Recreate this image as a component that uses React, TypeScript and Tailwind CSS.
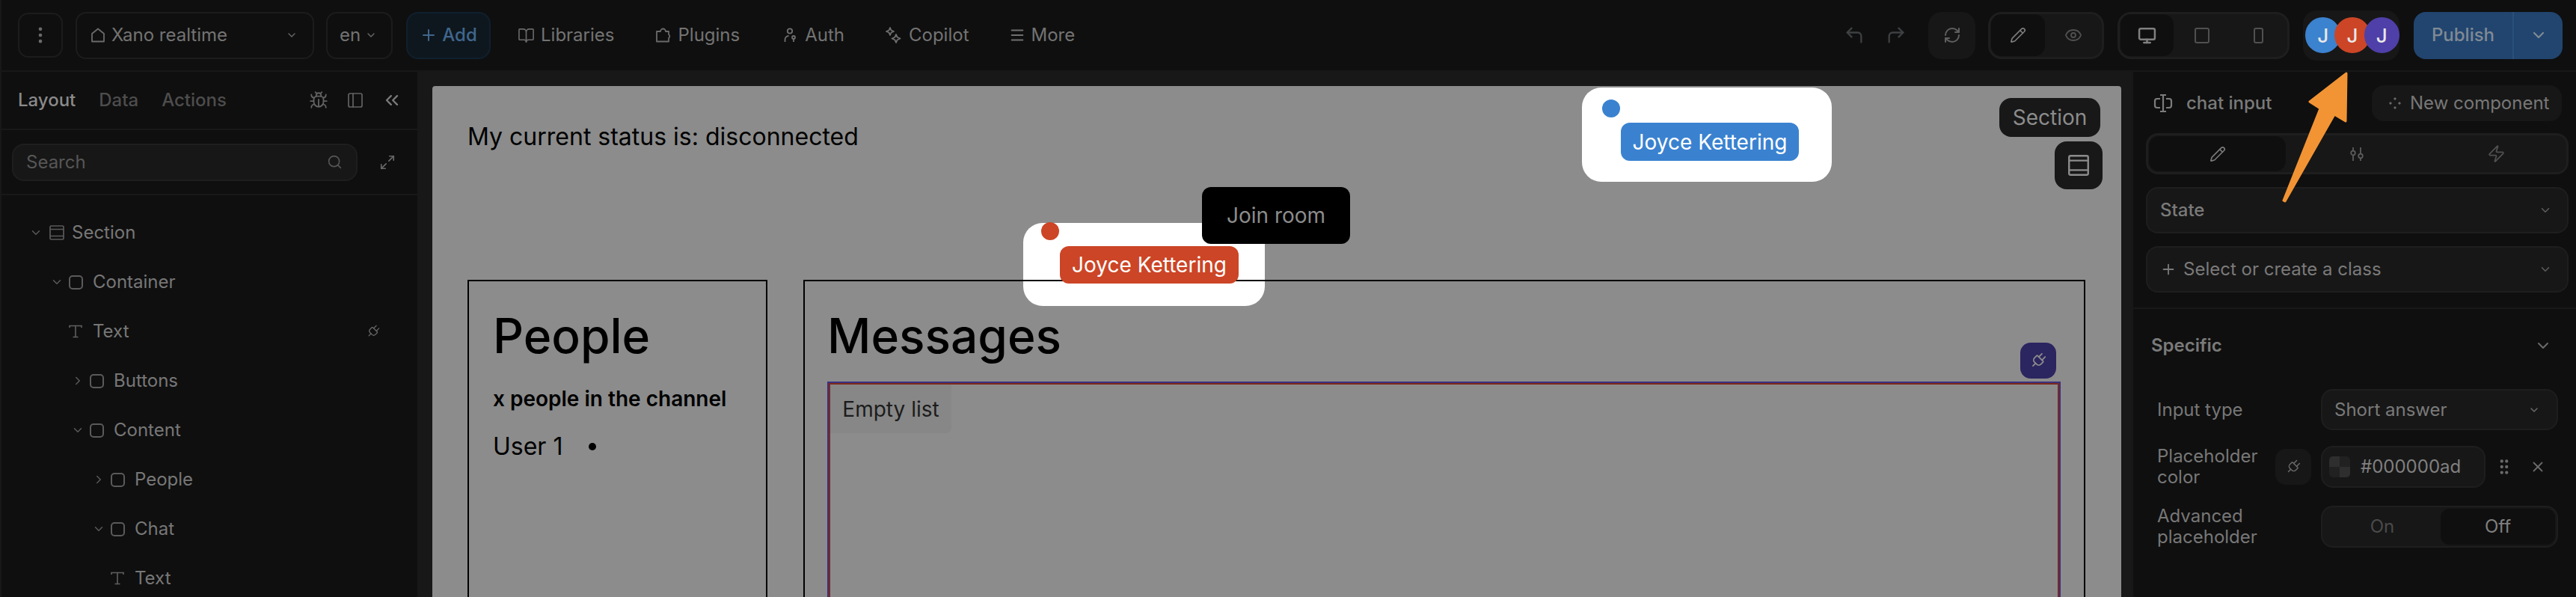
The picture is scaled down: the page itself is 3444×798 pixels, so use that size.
import {
  Bug,
  ChevronDown,
  ChevronRight,
  ChevronsLeft,
  CornerUpLeft,
  CornerUpRight,
  EllipsisVertical,
  Eye,
  GripVertical,
  BookOpen,
  Maximize2,
  Menu,
  Monitor,
  PanelLeft,
  Pencil,
  Plug,
  Plus,
  RefreshCw,
  Search,
  X,
  Zap,
} from "lucide-react";

function HomeIcon() {
  return (
    <svg width="22" height="20" viewBox="0 0 22 20" fill="none" stroke="#6a6a6a" strokeWidth="1.8" strokeLinejoin="round">
      <path d="M11 1.5 19 8v10.5H3V8Z" />
    </svg>
  );
}

function PluginIcon() {
  return (
    <svg width="23" height="20" viewBox="0 0 23 20" fill="none" stroke="#6a6a6a" strokeWidth="1.8" strokeLinejoin="round">
      <path d="M3 5h5a3.5 3.5 0 0 1 7 0h4v4a3 3 0 0 1 0 5v4.5H3Z" />
    </svg>
  );
}

function AuthIcon() {
  return (
    <svg width="20" height="20" viewBox="0 0 20 20" fill="none" stroke="#707070" strokeWidth="1.8">
      <circle cx="9" cy="4.5" r="3.2" />
      <path d="M2.5 19v-3a5 5 0 0 1 5-5" />
      <circle cx="14" cy="13" r="2" />
      <path d="M14 15v4" />
    </svg>
  );
}

function SparkIcon() {
  return (
    <svg width="22" height="22" viewBox="0 0 22 22" fill="none" stroke="#707070" strokeWidth="1.8" strokeLinejoin="round">
      <path d="M7 1 8.5 4.5 12 6 8.5 7.5 7 11 5.5 7.5 2 6 5.5 4.5Z" />
      <path d="M15 10l1.7 3.8 3.8 1.7-3.8 1.7L15 21l-1.7-3.8-3.8-1.7 3.8-1.7Z" />
    </svg>
  );
}

function SectionIcon({ className }: { className: string }) {
  return (
    <svg className={className} viewBox="0 0 24 24" fill="none" stroke="currentColor" strokeWidth="1.7">
      <rect x="3" y="3" width="18" height="18" rx="1.5" />
      <path d="M3 7.5h18M3 16.5h18" />
    </svg>
  );
}

function BoxIcon() {
  return <span className="block h-[19px] w-[19px] rounded-[5px] border-2 border-[#5a5a5a]" />;
}

function SerifT() {
  return (
    <svg width="18" height="18" viewBox="0 0 18 18" fill="none" stroke="#5f5f5f" strokeWidth="1.6">
      <path d="M1 4V1.5h16V4M9 1.5V16.5M5.5 16.5h7" />
    </svg>
  );
}

function SlidersIcon() {
  return (
    <svg width="20" height="20" viewBox="0 0 20 20" fill="none" stroke="#5c5c5c" strokeWidth="1.8">
      <path d="M5 1v4M5 12v7M15 1v8M15 16v3" />
      <circle cx="5" cy="8.5" r="2.8" />
      <circle cx="15" cy="12.5" r="2.8" />
    </svg>
  );
}

function CursorIcon() {
  return (
    <svg width="26" height="26" viewBox="0 0 26 26" fill="none" stroke="#7c7c7c" strokeWidth="2.2">
      <path d="M9 2h8M9 24h8M13 2v22M9 7H5a3 3 0 0 0-3 3v6a3 3 0 0 0 3 3h4M17 7h4a3 3 0 0 1 3 3v6a3 3 0 0 1-3 3h-4" />
    </svg>
  );
}

function DotsIcon() {
  return (
    <svg width="18" height="18" viewBox="0 0 18 18" fill="#6a6a6a">
      <path d="M9 1 11 3 9 5 7 3ZM3 7 5 9 3 11 1 9ZM15 7 17 9 15 11 13 9ZM9 13 11 15 9 17 7 15Z" />
    </svg>
  );
}

const tree = [
  { label: "Section", pad: "pl-[37px]", kind: "section", chev: "down" },
  { label: "Container", pad: "pl-[65px]", kind: "box", chev: "down" },
  { label: "Text", pad: "pl-[65px]", kind: "text", chev: "", plug: true },
  { label: "Buttons", pad: "pl-[93px]", kind: "box", chev: "right" },
  { label: "Content", pad: "pl-[93px]", kind: "box", chev: "down" },
  { label: "People", pad: "pl-[121px]", kind: "box", chev: "right" },
  { label: "Chat", pad: "pl-[121px]", kind: "box", chev: "down" },
  { label: "Text", pad: "pl-[121px]", kind: "text", chev: "" },
];

function TopBar() {
  return (
    <header className="flex h-[96px] shrink-0 items-center border-b-2 border-[#181818] pl-[22px] pr-[18px] text-[24px] text-[#737373]">
      <button className="flex h-[60px] w-[60px] items-center justify-center rounded-[14px] border-2 border-[#1c1c1c]">
        <EllipsisVertical size={28} color="#6a6a6a" />
      </button>
      <button className="ml-[17px] flex h-[63px] w-[319px] items-center gap-[7px] rounded-[14px] border-2 border-[#1c1c1c] pl-[17px] pr-[20px]">
        <HomeIcon />
        <span>Xano realtime</span>
        <ChevronDown size={16} color="#6a6a6a" className="ml-auto" />
      </button>
      <button className="ml-[16px] flex h-[63px] w-[89px] items-center gap-[6px] rounded-[14px] border-2 border-[#1c1c1c] pl-[16px]">
        <span>en</span>
        <ChevronDown size={16} color="#6a6a6a" />
      </button>
      <button className="ml-[18px] flex h-[63px] w-[113px] items-center justify-center gap-[6px] rounded-[16px] border-2 border-[#10202e] bg-[#0e171e] font-medium text-[#40668c]">
        <Plus size={24} />
        <span>Add</span>
      </button>
      <nav className="ml-[36px] flex items-center gap-[54px]">
        <span className="flex items-center gap-[8px]">
          <BookOpen size={23} color="#6a6a6a" strokeWidth={1.7} />
          Libraries
        </span>
        <span className="flex items-center gap-[8px]">
          <PluginIcon />
          Plugins
        </span>
        <span className="ml-[4px] flex items-center gap-[9px]">
          <AuthIcon />
          Auth
        </span>
        <span className="flex items-center gap-[10px]">
          <SparkIcon />
          Copilot
        </span>
        <span className="flex items-center gap-[7px]">
          <Menu size={22} color="#707070" strokeWidth={2.2} />
          More
        </span>
      </nav>

      <div className="ml-auto flex items-center">
        <CornerUpLeft size={28} color="#3d4142" strokeWidth={2} />
        <CornerUpRight size={28} color="#3d4142" strokeWidth={2} className="ml-[28px]" />
        <button className="ml-[29px] flex h-[63px] w-[63px] items-center justify-center rounded-[18px] bg-[#171717]">
          <RefreshCw size={24} color="#5f5f5f" strokeWidth={2} />
        </button>
        <div className="ml-[17px] flex h-[63px] w-[155px] items-center rounded-[18px] border-[3px] border-[#1e1e1e] bg-[#171717] p-[1px]">
          <span className="flex h-[56px] w-[72px] items-center justify-center rounded-[14px] bg-[#0f0f0f]">
            <Pencil size={22} color="#7c7c7c" strokeWidth={1.8} />
          </span>
          <span className="flex flex-1 items-center justify-center">
            <Eye size={24} color="#505050" strokeWidth={1.8} />
          </span>
        </div>
        <div className="ml-[18px] flex h-[63px] w-[230px] items-center rounded-[18px] border-[3px] border-[#1e1e1e] bg-[#171717] p-[1px]">
          <span className="flex h-[56px] w-[72px] items-center justify-center rounded-[14px] bg-[#0f0f0f]">
            <Monitor size={25} color="#808080" strokeWidth={2.4} />
          </span>
          <span className="flex w-[76px] items-center justify-center">
            <span className="h-[21px] w-[20px] rounded-[3px] border-2 border-[#505050]" />
          </span>
          <span className="flex w-[76px] items-center justify-center">
            <span className="h-[21px] w-[13px] rounded-[3px] border-2 border-[#505050]" />
          </span>
        </div>
        <div className="ml-[18px] flex h-[67px] w-[129px] items-center rounded-[18px] bg-[#171717] pl-[3px]">
          <span className="flex h-[48px] w-[48px] items-center justify-center rounded-full bg-[#3b82cf] text-[26px] font-medium text-[#e8e8e8]">J</span>
          <span className="-ml-[8px] flex h-[48px] w-[48px] items-center justify-center rounded-full bg-[#cc4526] text-[26px] font-medium text-[#e8e8e8]">J</span>
          <span className="-ml-[8px] flex h-[48px] w-[48px] items-center justify-center rounded-full bg-[#4f3fa8] text-[26px] font-medium text-[#e8e8e8]">J</span>
        </div>
        <div className="ml-[19px] flex h-[63px] w-[199px] items-center rounded-[16px] bg-[#21456f] text-[#808a94]">
          <span className="flex h-full w-[134px] items-center justify-center border-r-2 border-[#2a5078] font-medium">Publish</span>
          <span className="flex flex-1 items-center justify-center">
            <ChevronDown size={24} color="#808a94" strokeWidth={2.2} />
          </span>
        </div>
      </div>
    </header>
  );
}

function LeftPanel() {
  return (
    <aside className="flex w-[556px] shrink-0 flex-col bg-[#0f0f0f] text-[24px]">
      <div className="flex h-[78px] shrink-0 items-center border-b-2 border-[#181818] pl-[22px] pr-[20px]">
        <span className="font-medium text-[#8a8a8a]">Layout</span>
        <span className="ml-[31px] font-medium text-[#4d4d4d]">Data</span>
        <span className="ml-[31px] font-medium text-[#4d4d4d]">Actions</span>
        <Bug size={26} color="#626262" strokeWidth={1.7} className="ml-auto" />
        <PanelLeft size={24} color="#626262" strokeWidth={1.7} className="ml-[24px]" />
        <ChevronsLeft size={28} color="#7a7a7a" strokeWidth={2} className="ml-[23px]" />
      </div>
      <div className="flex h-[87px] shrink-0 items-center border-b-2 border-[#181818] pl-[14px]">
        <div className="flex h-[50px] w-[462px] items-center justify-between rounded-[16px] border-2 border-[#1e1e1e] bg-[#171717] pl-[17px] pr-[18px] text-[#565656]">
          <span>Search</span>
          <Search size={21} color="#565656" strokeWidth={1.8} />
        </div>
        <Maximize2 size={22} color="#6a6a6a" strokeWidth={1.8} className="ml-[29px]" />
      </div>
      <div className="pt-[17px]">
        {tree.map((row, i) => (
          <div key={i} className={`flex h-[66px] items-center ${row.pad} text-[#777777]`}>
            <span className="flex w-[25px] shrink-0 items-center">
              {row.chev === "down" && <ChevronDown size={18} color="#5a5a5a" strokeWidth={2} />}
              {row.chev === "right" && <ChevronRight size={18} color="#5a5a5a" strokeWidth={2} />}
            </span>
            <span className="flex w-[32px] shrink-0 items-center">
              {row.kind === "section" && <SectionIcon className="h-[24px] w-[24px] text-[#5a5a5a]" />}
              {row.kind === "box" && <BoxIcon />}
              {row.kind === "text" && <SerifT />}
            </span>
            <span>{row.label}</span>
            {row.plug && <Plug size={20} color="#666666" strokeWidth={1.6} className="ml-auto mr-[49px] rotate-45" />}
          </div>
        ))}
      </div>
    </aside>
  );
}

function Cursor({
  card,
  dot,
  dotColor,
}: {
  card: string;
  dot: string;
  dotColor: string;
}) {
  return (
    <div className={`absolute rounded-[26px] bg-white ${card}`}>
      <span className={`absolute h-[24px] w-[24px] rounded-full ${dot} ${dotColor}`} />
    </div>
  );
}

function Canvas() {
  return (
    <div className="min-w-0 flex-1 bg-[#181818] pl-[20px] pr-[16px] pt-[19px]">
      <div className="relative h-full overflow-hidden rounded-t-[4px] bg-[#8c8c8c] pl-[47px] pr-[48px] pt-[44px] text-black">
        <Cursor card="left-[1537px] top-[2px] h-[126px] w-[334px]" dot="left-[27px] top-[16px]" dotColor="bg-[#3a82d0]" />
        <Cursor card="left-[790px] top-[183px] h-[111px] w-[323px]" dot="left-[24px] -top-[1px]" dotColor="bg-[#cc4526]" />

        <p className="relative text-[32px] leading-[48px]">My current status is: disconnected</p>

        <div className="relative mt-[167px] flex h-[500px] gap-[48px]">
          <section className="w-[401px] shrink-0 border-2 border-black pl-[32px] pt-[37px]">
            <h2 className="text-[64px] font-medium leading-[72px]">People</h2>
            <p className="mt-[28px] text-[28px] font-semibold leading-[40px]">x people in the channel</p>
            <div className="mt-[20px] flex items-center text-[32px] leading-[48px]">
              <span>User 1</span>
              <span className="ml-[35px] h-[10px] w-[10px] rounded-full bg-black" />
            </div>
          </section>
          <section className="relative flex-1 border-2 border-black pl-[30px] pr-[31px] pt-[37px]">
            <h2 className="text-[64px] font-medium leading-[72px]">Messages</h2>
            <button className="absolute right-[37px] top-[82px] flex h-[48px] w-[48px] items-center justify-center rounded-[14px] bg-[#2b2560]">
              <Plug size={24} color="#8c8c8c" strokeWidth={1.8} className="rotate-45" />
            </button>
            <div className="mt-[25px] h-[400px] border-2 border-[#3b3180]">
              <div className="h-full border-2 border-b-0 border-[#7c2a1a]">
                <div className="flex h-[65px] w-[162px] items-center justify-center rounded-br-[8px] bg-[#878787] text-[28px] text-[#1c1c1c]">
                  Empty list
                </div>
              </div>
            </div>
          </section>
        </div>

        <span className="absolute left-[1589px] top-[49px] flex h-[51px] w-[238px] items-center justify-center rounded-[12px] bg-[#3a82d0] text-[28px] text-white">
          Joyce Kettering
        </span>
        <span className="absolute left-[839px] top-[214px] flex h-[50px] w-[239px] items-center justify-center rounded-[12px] bg-[#cc4526] text-[28px] text-white">
          Joyce Kettering
        </span>
        <button className="absolute left-[1029px] top-[135px] flex h-[76px] w-[198px] items-center justify-center rounded-[12px] bg-black text-[28px] text-[#8c8c8c]">
          Join room
        </button>
        <span className="absolute left-[2095px] top-[16px] flex h-[52px] w-[135px] items-center justify-center rounded-[16px] bg-[#181818] text-[28px] text-[#8c8c8c]">
          Section
        </span>
        <button className="absolute left-[2169px] top-[74px] flex h-[64px] w-[64px] items-center justify-center rounded-[16px] bg-[#181818]">
          <SectionIcon className="h-[34px] w-[34px] text-[#8c8c8c]" />
        </button>
      </div>
    </div>
  );
}

function RightPanel() {
  return (
    <aside className="w-[592px] shrink-0 bg-[#0f0f0f] text-[24px] text-[#7a7a7a]">
      <div className="flex h-[82px] items-center pl-[27px] pr-[19px] pt-[1px]">
        <CursorIcon />
        <span className="ml-[18px] font-medium">chat input</span>
        <button className="ml-auto flex h-[48px] w-[254px] items-center gap-[11px] rounded-[16px] bg-[#171717] pl-[22px] text-[#777777]">
          <DotsIcon />
          New component
        </button>
      </div>
      <div className="ml-[17px] flex h-[55px] w-[565px] items-center rounded-[16px] border-[3px] border-[#1e1e1e] bg-[#171717] pl-[1px]">
        <span className="flex h-[47px] w-[183px] items-center justify-center rounded-[14px] bg-[#0f0f0f]">
          <Pencil size={22} color="#7a7a7a" strokeWidth={1.8} />
        </span>
        <span className="flex w-[190px] items-center justify-center">
          <SlidersIcon />
        </span>
        <span className="flex w-[182px] items-center justify-center">
          <Zap size={25} color="#505050" strokeWidth={1.7} />
        </span>
      </div>
      <div className="ml-[17px] mt-[17px] flex h-[62px] w-[565px] items-center justify-between rounded-[16px] border-2 border-[#1e1e1e] bg-[#171717] pl-[17px] pr-[20px] font-medium">
        State
        <ChevronDown size={18} color="#5f5f5f" />
      </div>
      <div className="ml-[17px] mt-[17px] flex h-[62px] w-[565px] items-center rounded-[16px] border-2 border-[#1e1e1e] bg-[#171717] pl-[17px] pr-[20px]">
        <Plus size={22} color="#7a7a7a" />
        <span className="ml-[9px]">Select or create a class</span>
        <ChevronDown size={18} color="#5f5f5f" className="ml-auto" />
      </div>
      <div className="mt-[20px] border-t-2 border-[#181818] pl-[24px] pr-[24px] pt-[32px]">
        <div className="flex h-[34px] items-center justify-between font-semibold">
          Specific
          <ChevronDown size={24} color="#6a6a6a" strokeWidth={2} className="mr-[8px]" />
        </div>
        <div className="mt-[41px] flex h-[55px] items-center">
          <span className="ml-[8px] w-[219px] text-[#777777]">Input type</span>
          <div className="flex h-[55px] w-[317px] items-center justify-between rounded-[16px] border-2 border-[#1e1e1e] bg-[#171717] pl-[16px] pr-[22px]">
            Short answer
            <ChevronDown size={16} color="#6a6a6a" strokeWidth={2.2} />
          </div>
        </div>
        <div className="mt-[21px] flex h-[56px] items-center">
          <span className="ml-[8px] w-[158px] leading-[28px] text-[#777777]">Placeholder color</span>
          <span className="flex h-[48px] w-[48px] items-center justify-center rounded-[14px] bg-[#171717]">
            <Plug size={22} color="#6a6a6a" strokeWidth={1.6} className="rotate-45" />
          </span>
          <div className="ml-[13px] flex h-[56px] w-[220px] items-center rounded-[16px] border-2 border-[#1e1e1e] bg-[#171717] pl-[9px]">
            <span className="grid h-[28px] w-[28px] grid-cols-2 grid-rows-2 overflow-hidden rounded-[5px]">
              <span className="bg-[#2e2e2e]" />
              <span className="bg-[#212121]" />
              <span className="bg-[#212121]" />
              <span className="bg-[#2e2e2e]" />
            </span>
            <span className="ml-[14px] text-[#808080]">#000000ad</span>
          </div>
          <GripVertical size={26} color="#6a6a6a" fill="#6a6a6a" className="ml-[12px]" />
          <X size={22} color="#6a6a6a" strokeWidth={2} className="ml-[21px]" />
        </div>
        <div className="mt-[24px] flex h-[56px] items-center">
          <span className="ml-[8px] w-[219px] leading-[28px] text-[#777777]">Advanced placeholder</span>
          <div className="flex h-[56px] w-[317px] items-center rounded-[16px] border-2 border-[#1e1e1e] bg-[#171717] p-[2px]">
            <span className="flex flex-1 justify-center text-[#4a4a4a]">On</span>
            <span className="flex h-[48px] w-[153px] items-center justify-center rounded-[12px] bg-[#0f0f0f] text-[#808080]">Off</span>
          </div>
        </div>
      </div>
    </aside>
  );
}

export default function App() {
  return (
    <div className="relative flex h-screen w-full flex-col overflow-hidden border-l-2 border-[#181818] bg-[#0f0f0f] font-['Inter',sans-serif]">
      <TopBar />
      <div className="flex min-h-0 flex-1">
        <LeftPanel />
        <Canvas />
        <RightPanel />
      </div>
      {/* annotation arrow drawn on top of the screenshot */}
      <svg className="pointer-events-none absolute -left-[2px] top-0" width="3444" height="798" viewBox="0 0 3444 798" fill="#f29434" stroke="#f29434" strokeWidth="3" strokeLinejoin="round">
        <path d="M3137 98 3088 136 3102 145 3053 268 3055 269 3121 153 3136 162Z" />
      </svg>
    </div>
  );
}
